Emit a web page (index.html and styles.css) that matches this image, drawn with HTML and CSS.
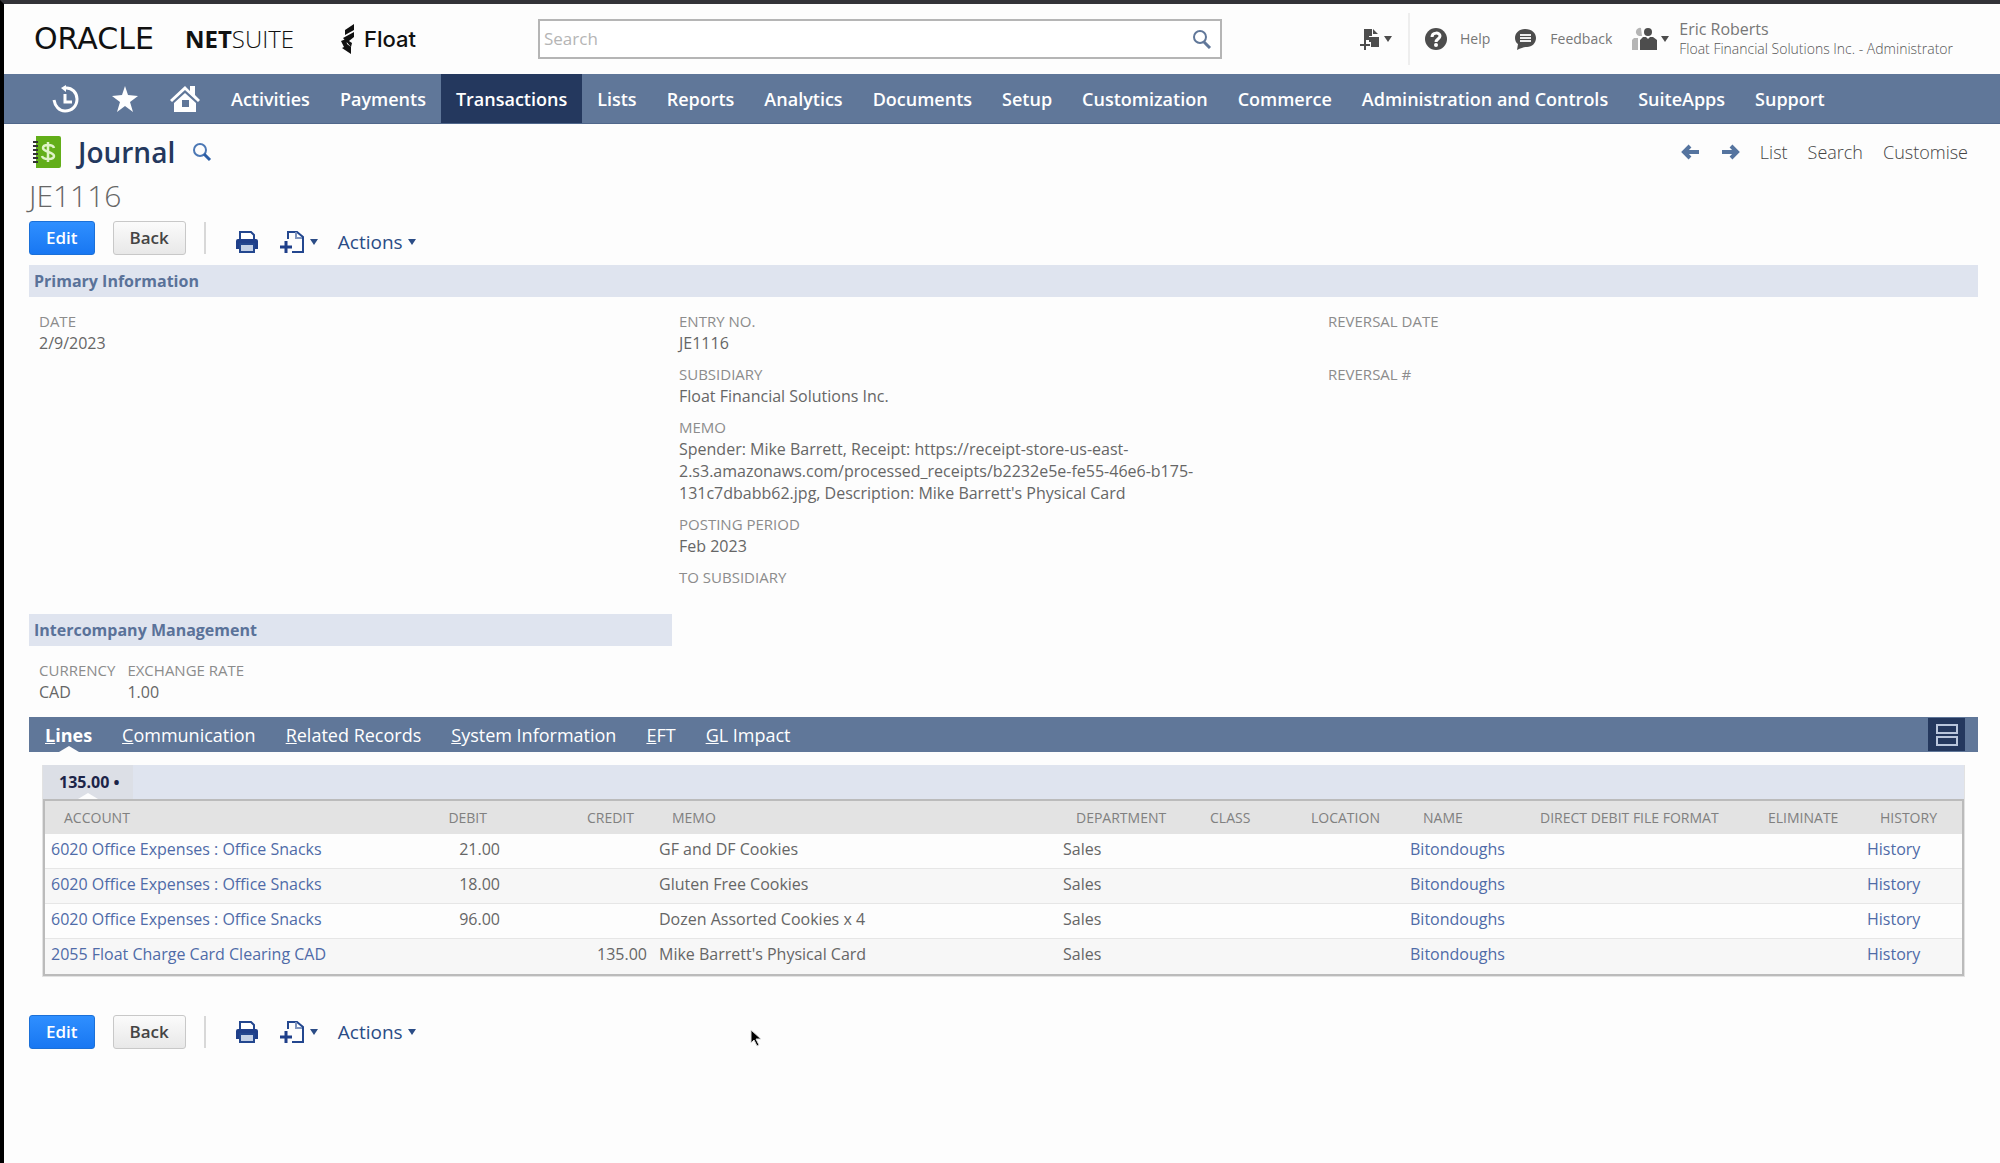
FILE: index.html
```html
<!DOCTYPE html>
<html lang="en">
<head>
    <meta charset="UTF-8">
    <meta name="viewport" content="width=device-width, initial-scale=1.0">
    <title>Journal - NetSuite</title>
    <link rel="stylesheet" href="styles.css">
</head>
<body>
    <!-- Shared icons -->
    <svg class="sprite" width="0" height="0">
        <symbol id="print" viewBox="0 0 24 24">
            <path d="M5 9V2h11l3 3v4" fill="#fff" stroke="#23478f" stroke-width="2"/>
            <path d="M3 9h18a2 2 0 0 1 2 2v8h-4v-4H5v4H1v-8a2 2 0 0 1 2-2z" fill="#1f3f8a"/>
            <path d="M5 14h14v8H5z" fill="#c3d0e6" stroke="#23478f" stroke-width="2"/>
        </symbol>
        <symbol id="newdoc" viewBox="0 0 26 24">
            <path d="M9 9V2h9l6 5v15H13" fill="none" stroke="#23478f" stroke-width="2"/>
            <path d="M17 2v6h6" fill="none" stroke="#7f94bd" stroke-width="2"/>
            <path d="M7 11v12M1 17h12" fill="none" stroke="#1f3f8a" stroke-width="3"/>
        </symbol>
    </svg>

    <header class="header">
        <div class="logos">
            <div class="oracle">ORACLE</div>
            <div class="netsuite"><b>NET</b>SUITE</div>
            <svg class="float-icon" width="15" height="30" viewBox="0 0 15 30">
                <path d="M4 6l9-6v6L4 11zM2 14l11-6v5l-5 4 3 2-1 4zM0 17l5-2 1 5 4 3v7l-9-6 2-1z" fill="#111"/>
            </svg>
            <div class="float">Float</div>
        </div>
        <form class="search">
            <input type="text" placeholder="Search" aria-label="Search">
            <button type="submit" aria-label="Go">
                <svg width="20" height="20" viewBox="0 0 20 20" fill="none" stroke="#607799" stroke-width="2"><circle cx="8" cy="8" r="6"/><path d="M12 13l6 6" stroke-width="3"/></svg>
            </button>
        </form>
        <div class="tools">
            <button class="tool add" aria-label="Create new">
                <svg width="20" height="24" viewBox="0 0 20 24" fill="#4d4d4d">
                    <path d="M4 2h8v7H9v4H4zM13 2l5 5h-5zM9 10h10v10h-8v-5H9z"/>
                    <path d="M5 13v10M0 18h10" stroke="#4d4d4d" stroke-width="2"/>
                </svg>
                <span class="caret"></span>
            </button>
            <a href="#" class="tool help">
                <svg width="22" height="22" viewBox="0 0 22 22"><circle cx="11" cy="11" r="11" fill="#4d4d4d"/><path d="M7 9c0-5 8-5 8-1 0 3-4 3-4 6" fill="none" stroke="#fff" stroke-width="3"/><circle cx="11" cy="17" r="2" fill="#fff"/></svg>
                Help
            </a>
            <a href="#" class="tool feedback">
                <svg width="23" height="22" viewBox="0 0 23 22"><path d="M11 1c7 0 11 4 11 9s-4 9-9 9c-3 0-6 1-10 3l1-6c-2-1-3-4-3-6 0-5 4-9 10-9z" fill="#4d4d4d"/><path d="M6 7h11M6 10h11M6 13h11" stroke="#eee" stroke-width="2"/></svg>
                Feedback
            </a>
            <div class="tool user">
                <svg width="25" height="24" viewBox="0 0 25 24">
                    <path d="M9 1a4 4 0 0 0-2 8h3zM0 23V13l2-2h4v12z" fill="#b5b5b5"/>
                    <circle cx="16" cy="5" r="4" fill="#4d4d4d"/>
                    <path d="M8 23V13l3-3h3l2 2 2-2h3l4 3v10z" fill="#4d4d4d"/>
                </svg>
                <span class="caret"></span>
                <div class="role">
                    <span class="name">Eric Roberts</span>
                    <span>Float Financial Solutions Inc. - Administrator</span>
                </div>
            </div>
        </div>
    </header>

    <nav class="nav">
        <a href="#" class="icon" aria-label="Recent"><svg width="28" height="28" viewBox="0 0 28 28" fill="none" stroke="#fff" stroke-width="3"><path d="M13 3c7-1 12 5 12 11 0 7-5 12-12 12C7 26 3 21 2 15"/><path d="M13 9v8h7"/><path d="M14 0v7L9 3z" fill="#fff" stroke="none"/></svg></a>
        <a href="#" class="icon" aria-label="Shortcuts"><svg width="28" height="28" viewBox="0 0 28 28" fill="#fff"><path d="M14 1l3 9 10 1-8 6 3 10-8-6-8 6 3-10-8-6 10-1z"/></svg></a>
        <a href="#" class="icon" aria-label="Home"><svg width="30" height="28" viewBox="0 0 30 28" fill="#fff"><path d="M15 1l5 5V1h5v9l5 5-2 2L15 5 2 17l-2-2zM15 8l11 10v9H4V18z"/><path d="M12 15h7v7h-7z" fill="#607799"/></svg></a>
        <a href="#">Activities</a>
        <a href="#">Payments</a>
        <a href="#" class="active">Transactions</a>
        <a href="#">Lists</a>
        <a href="#">Reports</a>
        <a href="#">Analytics</a>
        <a href="#">Documents</a>
        <a href="#">Setup</a>
        <a href="#">Customization</a>
        <a href="#">Commerce</a>
        <a href="#">Administration and Controls</a>
        <a href="#">SuiteApps</a>
        <a href="#">Support</a>
    </nav>

    <main class="page">
        <div class="title-row">
            <svg width="28" height="32" viewBox="0 0 28 32">
                <path d="M3 0h23a2 2 0 0 1 2 2v28a2 2 0 0 1-2 2H3z" fill="#62ae19"/>
                <path d="M0 6h5M0 10h5M0 14h5M0 18h5M0 22h5M0 26h5" stroke="#333" stroke-width="2"/>
                <path d="M21 12c-1-4-11-4-11 0s11 4 11 8-11 4-12 0M15 6v20" fill="none" stroke="#dff3c8" stroke-width="2.5"/>
            </svg>
            <h1>Journal</h1>
            <svg width="20" height="20" viewBox="0 0 20 20" fill="none" stroke="#4c78b5" stroke-width="2"><circle cx="8" cy="8" r="6"/><path d="M12 12l6 6" stroke="#2c5ea6" stroke-width="3"/></svg>
            <div class="page-links">
                <a href="#" class="arrow" aria-label="Previous"><svg width="18" height="16" viewBox="0 0 18 16" fill="none" stroke="#55749f" stroke-width="4"><path d="M18 8H4M9 2L3 8l6 6"/></svg></a>
                <a href="#" class="arrow" aria-label="Next"><svg width="18" height="16" viewBox="0 0 18 16" fill="none" stroke="#55749f" stroke-width="4"><path d="M0 8h14M9 2l6 6-6 6"/></svg></a>
                <a href="#">List</a>
                <a href="#">Search</a>
                <a href="#">Customise</a>
            </div>
        </div>
        <div class="record-no">JE1116</div>

        <div class="buttons top">
            <button class="btn primary">Edit</button>
            <button class="btn">Back</button>
            <span class="divider"></span>
            <button class="icon-btn" aria-label="Print"><svg width="24" height="24"><use href="#print"/></svg></button>
            <button class="icon-btn" aria-label="New"><svg width="26" height="24"><use href="#newdoc"/></svg><span class="caret"></span></button>
            <button class="icon-btn">Actions<span class="caret"></span></button>
        </div>

        <h2 class="section">Primary Information</h2>
        <div class="fields primary-fields">
            <dl>
                <dt>DATE</dt>
                <dd>2/9/2023</dd>
            </dl>
            <dl>
                <dt>ENTRY NO.</dt>
                <dd>JE1116</dd>
                <dt>SUBSIDIARY</dt>
                <dd>Float Financial Solutions Inc.</dd>
                <dt>MEMO</dt>
                <dd class="memo-text">Spender: Mike Barrett, Receipt: https://receipt-store-us-east-2.s3.amazonaws.com/processed_receipts/b2232e5e-fe55-46e6-b175-131c7dbabb62.jpg, Description: Mike Barrett's Physical Card</dd>
                <dt>POSTING PERIOD</dt>
                <dd>Feb 2023</dd>
                <dt>TO SUBSIDIARY</dt>
                <dd></dd>
            </dl>
            <dl>
                <dt>REVERSAL DATE</dt>
                <dd></dd>
                <dt>REVERSAL #</dt>
                <dd></dd>
            </dl>
        </div>

        <h2 class="section third">Intercompany Management</h2>
        <div class="fields currency-fields">
            <dl>
                <dt>CURRENCY</dt>
                <dd>CAD</dd>
            </dl>
            <dl>
                <dt>EXCHANGE RATE</dt>
                <dd>1.00</dd>
            </dl>
        </div>

        <div class="tabs">
            <a href="#" class="active"><u>L</u>ines</a>
            <a href="#"><u>C</u>ommunication</a>
            <a href="#"><u>R</u>elated Records</a>
            <a href="#"><u>S</u>ystem Information</a>
            <a href="#"><u>E</u>FT</a>
            <a href="#"><u>G</u>L Impact</a>
            <button class="layout" aria-label="Toggle layout"><svg width="22" height="24" viewBox="0 0 22 24" fill="none" stroke="#b9c6dc" stroke-width="2"><path d="M1 2h20v8H1zM1 14h20v8H1z"/></svg></button>
        </div>

        <div class="lines">
            <div class="subtabs"><a href="#">135.00 •</a></div>
            <table>
                <thead>
                    <tr>
                        <th class="c-account">ACCOUNT</th>
                        <th class="c-debit num">DEBIT</th>
                        <th class="c-credit num">CREDIT</th>
                        <th>MEMO</th>
                        <th class="c-department">DEPARTMENT</th>
                        <th class="c-class">CLASS</th>
                        <th class="c-location">LOCATION</th>
                        <th class="c-name">NAME</th>
                        <th class="c-format">DIRECT DEBIT FILE FORMAT</th>
                        <th class="c-eliminate">ELIMINATE</th>
                        <th class="c-history">HISTORY</th>
                    </tr>
                </thead>
                <tbody>
                    <tr>
                        <td><a href="#">6020 Office Expenses : Office Snacks</a></td>
                        <td class="num">21.00</td>
                        <td class="num"></td>
                        <td>GF and DF Cookies</td>
                        <td>Sales</td>
                        <td></td>
                        <td></td>
                        <td><a href="#">Bitondoughs</a></td>
                        <td></td>
                        <td></td>
                        <td><a href="#">History</a></td>
                    </tr>
                    <tr>
                        <td><a href="#">6020 Office Expenses : Office Snacks</a></td>
                        <td class="num">18.00</td>
                        <td class="num"></td>
                        <td>Gluten Free Cookies</td>
                        <td>Sales</td>
                        <td></td>
                        <td></td>
                        <td><a href="#">Bitondoughs</a></td>
                        <td></td>
                        <td></td>
                        <td><a href="#">History</a></td>
                    </tr>
                    <tr>
                        <td><a href="#">6020 Office Expenses : Office Snacks</a></td>
                        <td class="num">96.00</td>
                        <td class="num"></td>
                        <td>Dozen Assorted Cookies x 4</td>
                        <td>Sales</td>
                        <td></td>
                        <td></td>
                        <td><a href="#">Bitondoughs</a></td>
                        <td></td>
                        <td></td>
                        <td><a href="#">History</a></td>
                    </tr>
                    <tr>
                        <td><a href="#">2055 Float Charge Card Clearing CAD</a></td>
                        <td class="num"></td>
                        <td class="num">135.00</td>
                        <td>Mike Barrett's Physical Card</td>
                        <td>Sales</td>
                        <td></td>
                        <td></td>
                        <td><a href="#">Bitondoughs</a></td>
                        <td></td>
                        <td></td>
                        <td><a href="#">History</a></td>
                    </tr>
                </tbody>
            </table>
        </div>

        <div class="buttons bottom">
            <button class="btn primary">Edit</button>
            <button class="btn">Back</button>
            <span class="divider"></span>
            <button class="icon-btn" aria-label="Print"><svg width="24" height="24"><use href="#print"/></svg></button>
            <button class="icon-btn" aria-label="New"><svg width="26" height="24"><use href="#newdoc"/></svg><span class="caret"></span></button>
            <button class="icon-btn">Actions<span class="caret"></span></button>
        </div>
    </main>

    <svg class="cursor" width="12" height="18" viewBox="0 0 12 18"><path d="M1 1v13l3-3 3 6 2-1-3-6h5z" fill="#000" stroke="#ddd" stroke-width="1"/></svg>
</body>
</html>
```
FILE: styles.css
```css
* {
    box-sizing: border-box;
}

body {
    margin: 0;
    min-height: 100vh;
    border-top: 4px solid #333338;
    border-left: 4px solid #000;
    background: #fdfdfd;
    color: #666;
    font-family: "Open Sans", "Noto Sans", sans-serif;
    font-size: 16px;
    line-height: 22px;
}

a {
    color: inherit;
    text-decoration: none;
}

button {
    font: inherit;
    color: inherit;
    background: none;
    border: none;
    padding: 0;
    cursor: pointer;
}

svg {
    display: block;
    flex: none;
}

.sprite {
    position: absolute;
}

.caret {
    border: 4px solid transparent;
    border-top: 6px solid currentColor;
    border-bottom: none;
}

/* Header */
.header {
    display: flex;
    align-items: center;
    height: 70px;
    padding: 0 47px 0 30px;
}

.logos {
    display: flex;
    align-items: center;
    width: 504px;
    color: #111;
}

.oracle {
    width: 151px;
    font-family: "DejaVu Sans", sans-serif;
    font-size: 30px;
}

.netsuite {
    width: 156px;
    font-size: 24px;
    font-weight: 300;
}

.netsuite b {
    font-weight: 700;
}

.float-icon {
    margin-right: 8px;
}

.float {
    font-family: Inter, sans-serif;
    font-size: 22px;
    font-weight: 500;
}

.search {
    display: flex;
    flex: 0 1 684px;
    height: 40px;
    border: 2px solid #b5b5b5;
    background: #fff;
}

.search input {
    flex: 1;
    min-width: 0;
    border: none;
    outline: none;
    background: none;
    padding: 0 4px;
    font: inherit;
    font-size: 17px;
}

.search input::placeholder {
    color: #b5b5b5;
}

.search button {
    padding: 0 8px;
}

.tools {
    display: flex;
    align-items: center;
    margin-left: auto;
    font-size: 14px;
    color: #777;
}

.tool {
    display: flex;
    align-items: center;
}

.tool .caret {
    color: #4d4d4d;
    margin-left: 4px;
}

.add {
    height: 52px;
    padding-right: 16px;
    border-right: 2px solid #eee;
}

.help {
    gap: 13px;
    margin-left: 15px;
}

.feedback {
    gap: 13px;
    margin-left: 24px;
}

.user {
    margin-left: 20px;
}

.role {
    display: flex;
    flex-direction: column;
    margin-left: 10px;
    color: #555;
    font-weight: 300;
    line-height: 20px;
}

.role .name {
    font-size: 16px;
    font-weight: 400;
    color: #777;
}

/* Main menu */
.nav {
    display: flex;
    height: 50px;
    padding-left: 33px;
    background: #607799;
    border-bottom: 1px solid #50678b;
    color: #fff;
    font-size: 18px;
    font-weight: 600;
}

.nav a {
    display: flex;
    align-items: center;
    padding: 0 15px;
}

.nav .icon {
    padding: 0 16px 0 15px;
}

.nav .active {
    background: #24385e;
}

/* Page title */
.page {
    padding: 10px 22px 0 25px;
}

.title-row {
    display: flex;
    align-items: center;
    height: 36px;
    padding: 0 10px 0 4px;
}

h1 {
    margin: 0 17px;
    font-size: 28px;
    font-weight: 600;
    line-height: 36px;
    color: #24385e;
}

.page-links {
    display: flex;
    align-items: center;
    gap: 20px;
    margin-left: auto;
    color: #444;
    font-size: 18px;
    font-weight: 300;
}

.page-links .arrow + .arrow {
    margin-left: 3px;
}

.record-no {
    padding-top: 1px;
    font-size: 30px;
    font-weight: 300;
    line-height: 50px;
}

.buttons {
    display: flex;
    align-items: center;
    height: 34px;
}

.btn {
    height: 34px;
    margin-right: 18px;
    padding: 0 16px;
    border: 1px solid #c8c8c8;
    border-radius: 3px;
    background: linear-gradient(#fbfbfb, #e8e8e8);
    color: #444;
    font-size: 17px;
    font-weight: 600;
}

.primary {
    border-color: #1b70d8;
    background: linear-gradient(#2f8fff, #1877f2);
    color: #fff;
}

.divider {
    width: 2px;
    height: 32px;
    margin-right: 9px;
    background: #d8d8d8;
}

.icon-btn {
    display: flex;
    align-items: center;
    margin-left: 20px;
    color: #2b4c86;
    font-size: 19px;
}

.icon-btn .caret {
    margin-left: 5px;
}

.top .icon-btn {
    padding-top: 8px;
}

.bottom {
    margin-top: 38px;
}

/* Sections and fields */
.section {
    margin: 10px 0 0;
    padding: 0 5px;
    background: #dfe4ef;
    color: #5a7299;
    font-size: 16px;
    font-weight: 700;
    line-height: 32px;
}

.third {
    width: 33%;
    margin-top: 4px;
}

.fields {
    padding: 14px 10px 0;
}

.fields dl {
    margin: 0;
}

.fields dt {
    color: #8c8c8c;
    font-size: 15px;
    line-height: 21px;
}

.fields dd {
    min-height: 22px;
    margin: 0 0 10px;
}

.primary-fields {
    display: grid;
    grid-template-columns: 640px 649px 1fr;
}

.primary-fields dd:last-child {
    margin-bottom: 0;
}

.memo-text {
    max-width: 540px;
}

.currency-fields {
    display: flex;
    gap: 12px;
}

/* Tabs */
.tabs {
    display: flex;
    align-items: center;
    gap: 30px;
    height: 35px;
    margin-top: 4px;
    padding: 0 13px 0 16px;
    background: #607799;
    color: #fff;
    font-size: 18px;
}

.tabs .active {
    position: relative;
    font-weight: 700;
}

.tabs .active::after,
.subtabs a::after {
    content: "";
    position: absolute;
    left: 50%;
    bottom: -6px;
    margin-left: -10px;
    border: 10px solid transparent;
    border-top: none;
    border-bottom: 6px solid #fdfdfd;
}

.layout {
    display: flex;
    align-items: center;
    justify-content: center;
    width: 37px;
    height: 33px;
    margin-left: auto;
    background: #24385e;
}

/* Lines table */
.lines {
    margin: 13px 13px 0;
    border: 1px solid #e2e2e2;
    border-top: none;
}

.subtabs {
    display: flex;
    background: #dfe4ef;
}

.subtabs a {
    position: relative;
    padding: 0 14px 0 16px;
    background: #dcdfe6;
    color: #1c2448;
    font-weight: 700;
    line-height: 34px;
}

.subtabs a::after {
    bottom: 0;
}

table {
    width: 100%;
    table-layout: fixed;
    border-collapse: separate;
    border-spacing: 0;
    border: 2px solid #bbb;
}

th,
td {
    text-align: left;
    white-space: nowrap;
}

th {
    height: 33px;
    padding: 0 19px;
    background: #e3e3e3;
    color: #808080;
    font-size: 14px;
    font-weight: 400;
}

td {
    height: 35px;
    padding: 0 6px 5px;
    border-bottom: 1px solid #e6e6e6;
}

tr:nth-child(even) td {
    background: #f7f7f7;
}

tr:last-child td {
    border-bottom: none;
}

td a {
    color: #4f6ba8;
}

.num {
    text-align: right;
}

.c-account {
    width: 383px;
}

.c-debit {
    width: 78px;
}

.c-credit {
    width: 147px;
}

.c-department {
    width: 134px;
}

.c-class,
.c-history {
    width: 101px;
}

.c-location,
.c-eliminate {
    width: 112px;
}

.c-name {
    width: 117px;
}

.c-format {
    width: 228px;
}

.cursor {
    position: absolute;
    left: 750px;
    top: 1029px;
}
```
